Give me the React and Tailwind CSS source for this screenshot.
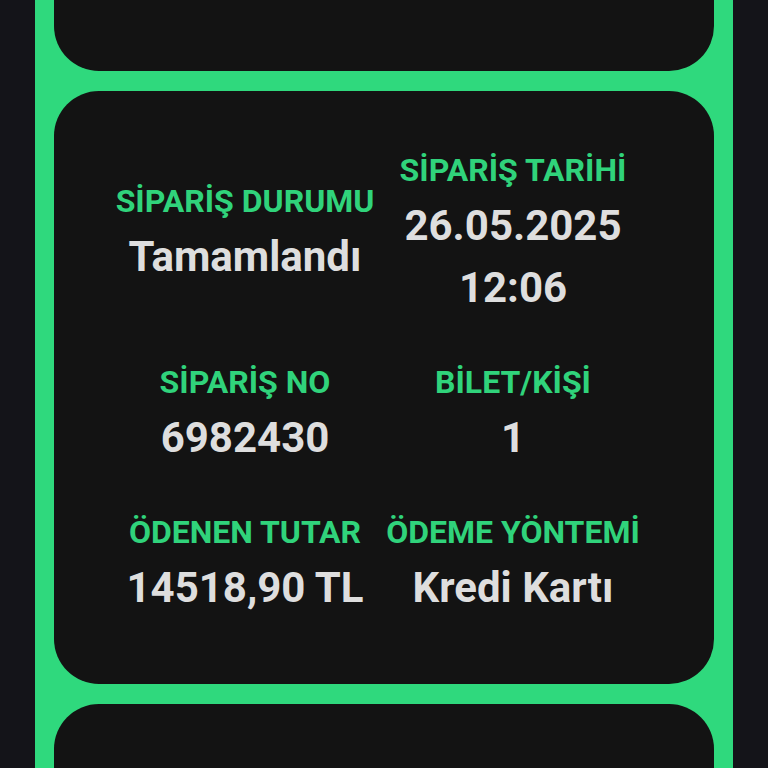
import React from "react";

function Field({ label, children }) {
  return (
    <div className="flex flex-col items-center">
      <div className="text-[32px] leading-[50px] font-bold text-[#30d37b] whitespace-nowrap">{label}</div>
      {children}
    </div>
  );
}

function Value({ children }) {
  return <div className="text-[42px] leading-[62px] font-bold text-[#dedede] whitespace-nowrap">{children}</div>;
}

export default function App() {
  return (
    <div className="h-[768px] w-[768px] overflow-hidden bg-[#141419] px-[35px]" style={{ fontFamily: "Roboto, 'Noto Sans', sans-serif" }}>
      <div className="h-full bg-[#2fd97d] px-[19px] flex flex-col gap-[20px]">
        <div className="h-[71px] shrink-0 bg-[#131313] rounded-b-[45px]" />
        <div className="h-[593px] shrink-0 bg-[#131313] rounded-[45px] pl-[61px] pt-[54px]">
          <div className="grid grid-cols-[260px_260px] gap-x-[8px] gap-y-[38px] items-center">
            <Field label="SİPARİŞ DURUMU">
              <Value>Tamamlandı</Value>
            </Field>
            <Field label="SİPARİŞ TARİHİ">
              <Value>26.05.2025</Value>
              <Value>12:06</Value>
            </Field>
            <Field label="SİPARİŞ NO">
              <Value>6982430</Value>
            </Field>
            <Field label="BİLET/KİŞİ">
              <Value>1</Value>
            </Field>
            <Field label="ÖDENEN TUTAR">
              <Value>14518,90 TL</Value>
            </Field>
            <Field label="ÖDEME YÖNTEMİ">
              <Value>Kredi Kartı</Value>
            </Field>
          </div>
        </div>
        <div className="h-[200px] shrink-0 bg-[#131313] rounded-t-[45px]" />
      </div>
    </div>
  );
}
